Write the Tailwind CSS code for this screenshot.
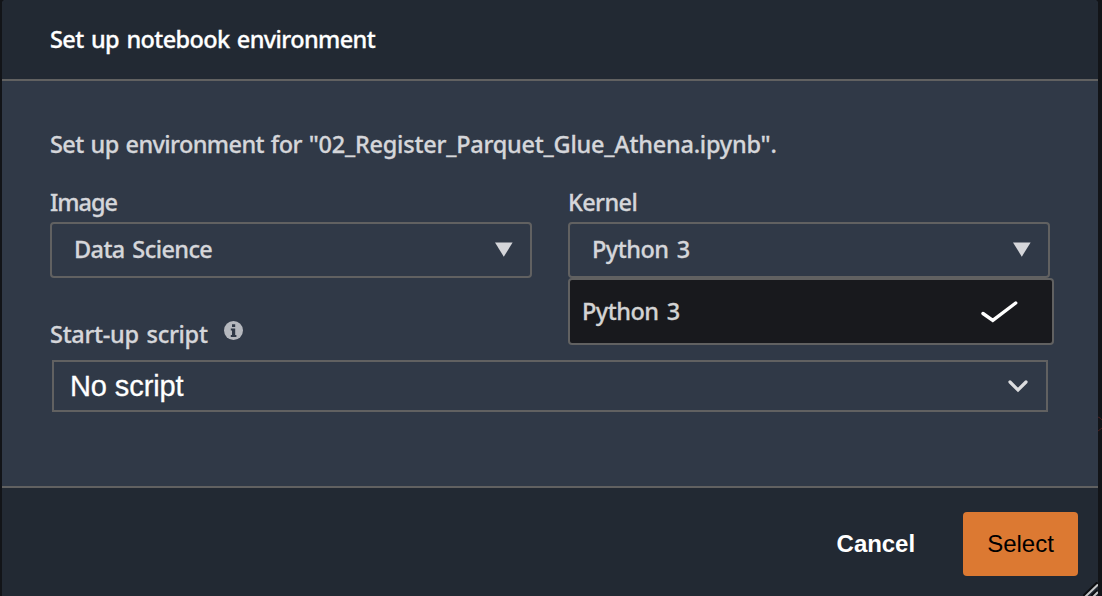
<!DOCTYPE html>
<html lang="en">
<head>
<meta charset="utf-8">
<title>Set up notebook environment</title>
<script src="https://cdn.jsdelivr.net/npm/@tailwindcss/browser@4"></script>
</head>
<body class="h-[596px] w-[1102px] overflow-hidden bg-[#121418] pl-[2px] pr-1 font-['Noto_Sans',sans-serif] text-[23.5px] leading-8 font-medium text-[#d5d6da]">
<main class="relative flex h-full flex-col overflow-hidden rounded-t-[4px] bg-[#303947]">
  <header class="flex h-[81px] shrink-0 items-center border-b-2 border-[#616161] bg-[#222933] pb-[2px] pl-12 text-white">
    <h1 class="whitespace-nowrap tracking-[-0.62px] [-webkit-text-stroke:0.3px_currentColor] [word-spacing:1.9px]">Set up notebook environment</h1>
  </header>
  <section class="h-[405px] shrink-0 px-12 pt-[47px] [-webkit-text-stroke:0.3px_currentColor]">
    <p class="whitespace-nowrap tracking-[-0.6px] [word-spacing:1.4px]">Set up environment for <span class="tracking-[-0.23px]">"02_Register_Parquet_Glue_Athena.ipynb".</span></p>
    <div class="mt-[26px] flex gap-9">
      <div class="w-[482px]">
        <div class="h-9 tracking-[-1px]">Image</div>
        <div class="flex h-14 items-center justify-between rounded-[4px] border-2 border-[#616161] pr-[17px] pb-[2px] pl-[22px]">
          <span class="tracking-[-0.6px] [word-spacing:2.2px]">Data Science</span>
          <svg class="h-[15px] w-[18px]" viewBox="0 0 18 15"><path d="M0 0.5H17.6L8.8 14.7Z" fill="#d5d6da"/></svg>
        </div>
      </div>
      <div class="relative w-[482px]">
        <div class="h-9 tracking-[-0.62px]">Kernel</div>
        <div class="flex h-14 items-center justify-between rounded-[4px] border-2 border-[#616161] pr-[17px] pb-[2px] pl-[22px]">
          <span class="tracking-[-0.5px] [word-spacing:2.6px]">Python 3</span>
          <svg class="h-[15px] w-[18px]" viewBox="0 0 18 15"><path d="M0 0.5H17.6L8.8 14.7Z" fill="#d5d6da"/></svg>
        </div>
        <div class="absolute top-[92px] left-0 flex h-[67px] w-[486px] items-center justify-between rounded-[4px] border-2 border-[#616161] bg-[#18191d] pr-[34px] pb-px pl-3 text-[#d3d3d3]">
          <span class="tracking-[-0.5px] [word-spacing:2.6px]">Python 3</span>
          <svg class="h-6 w-[38px]" viewBox="0 0 38 24" fill="none"><path d="M3 14.5L12.8 21.3L35.7 4" stroke="#fff" stroke-width="3.4" stroke-linecap="round"/></svg>
        </div>
      </div>
    </div>
    <div class="mt-10 flex h-[42px] gap-4">
      <span class="tracking-[-0.3px] [word-spacing:2px]">Start-up script</span>
      <svg class="mt-[3px] size-[19px]" viewBox="0 0 19 19"><circle cx="9.5" cy="9.5" r="9.5" fill="#b5b8be"/><path d="M8 3.2H11.2V6H8ZM6.8 7.6H11.2V14H12.4V16H6.8V14H8V9.4H6.8Z" fill="#303947"/></svg>
    </div>
    <div class="mx-[2px] flex h-[52px] items-center justify-between border-2 border-[#616161] pr-[18px] pl-4 font-['Liberation_Sans',sans-serif] text-[29px] font-normal text-white">
      <span class="tracking-[-0.1px]">No script</span>
      <svg class="h-[14px] w-5" viewBox="0 0 20 14" fill="none"><path d="M2 3L10 11L18 3" stroke="#dcdddf" stroke-width="3.2" stroke-linecap="round"/></svg>
    </div>
  </section>
  <footer class="flex grow items-start justify-end gap-12 border-t-2 border-[#616161] bg-[#222933] pt-6 pr-5 font-['Liberation_Sans',sans-serif] text-2xl leading-[64px]">
    <button class="font-bold tracking-[-0.05px] text-white">Cancel</button>
    <button class="h-16 w-[115px] rounded-[4px] bg-[#dc7932] font-normal text-black">Select</button>
  </footer>
  <svg class="absolute right-0 bottom-0 h-[14px] w-[15px]" viewBox="0 0 15 14"><path d="M1 14.5L15 1M9 14.5L15 9" stroke="#0b0d10" stroke-width="4"/><path d="M2 15L15 2.5M10 15L15 10" stroke="#c4c6c8" stroke-width="2"/></svg>
</main>
<svg class="absolute top-[415px] left-[1098px] h-5 w-1" viewBox="0 0 4 20"><path d="M0 2Q3 3 4 5M0 16L4 13" stroke="#4a2020" fill="none"/></svg>
</body>
</html>
